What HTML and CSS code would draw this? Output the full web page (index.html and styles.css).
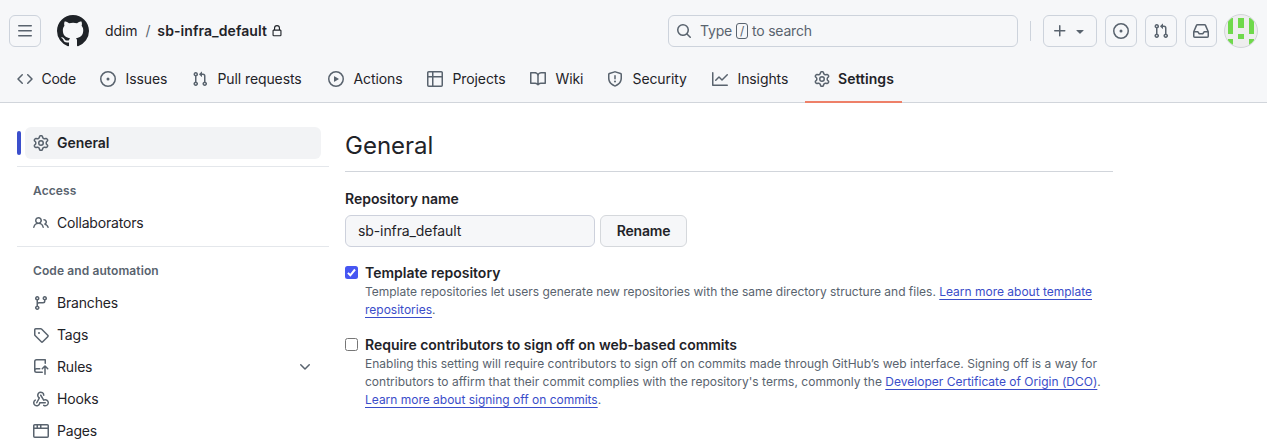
FILE: index.html
```html
<!DOCTYPE html>
<html lang="en">
<head>
<meta charset="utf-8">
<title>General settings</title>
<link rel="stylesheet" href="styles.css">
</head>
<body>
<svg class="sprite" aria-hidden="true">
  <symbol id="gear" viewBox="0 0 16 16"><path d="M8 0a8.2 8.2 0 0 1 .701.031C9.444.095 9.99.645 10.16 1.29l.288 1.107c.018.066.079.158.212.224.231.114.454.243.668.386.123.082.233.09.299.071l1.103-.303c.644-.176 1.392.021 1.82.63.27.385.506.792.704 1.218.315.675.111 1.422-.364 1.891l-.814.806c-.049.048-.098.147-.088.294.016.257.016.515 0 .772-.01.147.038.246.088.294l.814.806c.475.469.679 1.216.364 1.891a7.977 7.977 0 0 1-.704 1.217c-.428.61-1.176.807-1.82.63l-1.102-.302c-.067-.019-.177-.011-.3.071a5.909 5.909 0 0 1-.668.386c-.133.066-.194.158-.211.224l-.29 1.106c-.168.646-.715 1.196-1.458 1.26a8.006 8.006 0 0 1-1.402 0c-.743-.064-1.289-.614-1.458-1.26l-.289-1.106c-.018-.066-.079-.158-.212-.224a5.738 5.738 0 0 1-.668-.386c-.123-.082-.233-.09-.299-.071l-1.103.303c-.644.176-1.392-.021-1.82-.63a8.12 8.12 0 0 1-.704-1.218c-.315-.675-.111-1.422.363-1.891l.815-.806c.05-.048.098-.147.088-.294a6.214 6.214 0 0 1 0-.772c.01-.147-.038-.246-.088-.294l-.815-.806C.635 6.045.431 5.298.746 4.623a7.92 7.92 0 0 1 .704-1.217c.428-.61 1.176-.807 1.82-.63l1.102.302c.067.019.177.011.3-.071.214-.143.437-.272.668-.386.133-.066.194-.158.211-.224l.29-1.106C6.009.645 6.556.095 7.299.03 7.53.01 7.764 0 8 0Zm-.571 1.525c-.036.003-.108.036-.137.146l-.289 1.105c-.147.561-.549.967-.998 1.189-.173.086-.34.183-.5.29-.417.278-.97.423-1.529.27l-1.103-.303c-.109-.03-.175.016-.195.045-.22.312-.412.644-.573.99-.014.031-.021.11.059.19l.815.806c.411.406.562.957.53 1.456a4.709 4.709 0 0 0 0 .582c.032.499-.119 1.05-.53 1.456l-.815.806c-.081.08-.073.159-.059.19.162.346.353.677.573.989.02.03.085.076.195.046l1.102-.303c.56-.153 1.113-.008 1.53.27.161.107.328.204.501.29.447.222.85.629.997 1.189l.289 1.105c.029.109.101.143.137.146a6.6 6.6 0 0 0 1.142 0c.036-.003.108-.036.137-.146l.289-1.105c.147-.561.549-.967.998-1.189.173-.086.34-.183.5-.29.417-.278.97-.423 1.529-.27l1.103.303c.109.029.175-.016.195-.045.22-.313.411-.644.573-.99.014-.031.021-.11-.059-.19l-.815-.806c-.411-.406-.562-.957-.53-1.456a4.709 4.709 0 0 0 0-.582c-.032-.499.119-1.05.53-1.456l.815-.806c.081-.08.073-.159.059-.19a6.464 6.464 0 0 0-.573-.989c-.02-.03-.085-.076-.195-.046l-1.102.303c-.56.153-1.113.008-1.53-.27a4.44 4.44 0 0 0-.501-.29c-.447-.222-.85-.629-.997-1.189l-.289-1.105c-.029-.11-.101-.143-.137-.146a6.6 6.6 0 0 0-1.142 0ZM11 8a3 3 0 1 1-6 0 3 3 0 0 1 6 0ZM9.5 8a1.5 1.5 0 1 0-3.001.001A1.5 1.5 0 0 0 9.5 8Z"/></symbol>
  <symbol id="issue" viewBox="0 0 16 16"><path d="M8 9.5a1.5 1.5 0 1 0 0-3 1.5 1.5 0 0 0 0 3Z"/><path d="M8 0a8 8 0 1 1 0 16A8 8 0 0 1 8 0ZM1.5 8a6.5 6.5 0 1 0 13 0 6.5 6.5 0 0 0-13 0Z"/></symbol>
  <symbol id="pull" viewBox="0 0 16 16"><path d="M1.5 3.25a2.25 2.25 0 1 1 3 2.122v5.256a2.251 2.251 0 1 1-1.5 0V5.372A2.25 2.25 0 0 1 1.5 3.25Zm5.677-.177L9.573.677A.25.25 0 0 1 10 .854V2.5h1A2.5 2.5 0 0 1 13.5 5v5.628a2.251 2.251 0 1 1-1.5 0V5a1 1 0 0 0-1-1h-1v1.646a.25.25 0 0 1-.427.177L7.177 3.427a.25.25 0 0 1 0-.354ZM3.75 2.5a.75.75 0 1 0 0 1.5.75.75 0 0 0 0-1.5Zm0 9.5a.75.75 0 1 0 0 1.5.75.75 0 0 0 0-1.5Zm8.25.75a.75.75 0 1 0 1.5 0 .75.75 0 0 0-1.5 0Z"/></symbol>
</svg>

<header class="header">
  <div class="topbar">
    <button class="icon-btn" aria-label="Menu"><svg class="icon" viewBox="0 0 16 16"><path d="M1 2.75A.75.75 0 0 1 1.75 2h12.5a.75.75 0 0 1 0 1.5H1.75A.75.75 0 0 1 1 2.75Zm0 5A.75.75 0 0 1 1.75 7h12.5a.75.75 0 0 1 0 1.5H1.75A.75.75 0 0 1 1 7.75ZM1.75 12h12.5a.75.75 0 0 1 0 1.5H1.75a.75.75 0 0 1 0-1.5Z"/></svg></button>
    <svg class="logo" viewBox="0 0 16 16"><path d="M8 0c4.42 0 8 3.58 8 8a8.013 8.013 0 0 1-5.45 7.59c-.4.08-.55-.17-.55-.38 0-.27.01-1.13.01-2.2 0-.75-.25-1.23-.54-1.48 1.78-.2 3.65-.88 3.65-3.95 0-.88-.31-1.59-.82-2.15.08-.2.36-1.02-.08-2.12 0 0-.67-.22-2.2.82-.64-.18-1.32-.27-2-.27-.68 0-1.36.09-2 .27-1.53-1.03-2.2-.82-2.2-.82-.44 1.1-.16 1.92-.08 2.12-.51.56-.82 1.28-.82 2.15 0 3.06 1.86 3.75 3.64 3.95-.23.2-.44.55-.51 1.07-.46.21-1.61.55-2.33-.66-.15-.24-.6-.83-1.23-.82-.67.01-.27.38.01.53.34.19.73.9.82 1.13.16.45.68 1.31 2.69.94 0 .67.01 1.3.01 1.49 0 .21-.15.45-.55.38A7.995 7.995 0 0 1 0 8c0-4.42 3.58-8 8-8Z"/></svg>
    <div class="crumbs">
      <span class="owner">ddim</span><span class="slash">/</span><span class="repo">sb-infra_default</span>
      <svg class="lock" viewBox="0 0 16 16"><path d="M4 4a4 4 0 0 1 8 0v2h.25c.966 0 1.75.784 1.75 1.75v5.5A1.75 1.75 0 0 1 12.25 15h-8.5A1.75 1.75 0 0 1 2 13.250v-5.5C2 6.784 2.784 6 3.750 6H4Zm8.250 3.500h-8.500a.25.25 0 0 0-.25.25v5.500c0 .138.112.25.25.25h8.500a.25.25 0 0 0 .25-.25v-5.500a.25.25 0 0 0-.25-.25ZM10.500 6V4a2.500 2.500 0 1 0-5 0v2Z"/></svg>
    </div>
    <div class="search">
      <svg class="icon" viewBox="0 0 16 16"><path d="M10.680 11.740a6 6 0 0 1-7.922-8.982 6 6 0 0 1 8.982 7.922l3.040 3.040a.749.749 0 0 1-.326 1.275.749.749 0 0 1-.734-.215ZM11.500 7a4.499 4.499 0 1 0-8.997 0A4.499 4.499 0 0 0 11.500 7Z"/></svg>
      <span class="search-text"><span>Type</span><kbd class="key">/</kbd><span>to search</span></span>
    </div>
    <span class="separator"></span>
    <div class="actions">
      <button class="icon-btn create" aria-label="Create new"><svg class="icon" viewBox="0 0 16 16"><path d="M7.750 2a.75.75 0 0 1 .75.75V7h4.250a.75.75 0 0 1 0 1.500H8.500v4.250a.75.75 0 0 1-1.500 0V8.500H2.750a.75.75 0 0 1 0-1.500H7V2.750A.75.75 0 0 1 7.750 2Z"/></svg><svg class="icon" viewBox="0 0 16 16"><path d="m4.427 7.427 3.396 3.396a.25.25 0 0 0 .354 0l3.396-3.396A.25.25 0 0 0 11.396 7H4.604a.25.25 0 0 0-.177.427Z"/></svg></button>
      <button class="icon-btn" aria-label="Issues"><svg class="icon"><use href="#issue"/></svg></button>
      <button class="icon-btn" aria-label="Pull requests"><svg class="icon"><use href="#pull"/></svg></button>
      <button class="icon-btn" aria-label="Inbox"><svg class="icon" viewBox="0 0 16 16"><path d="M2.800 2.060A1.750 1.750 0 0 1 4.410 1h7.180c.7 0 1.333.417 1.610 1.060l2.740 6.395c.04.093.06.194.06.295v4.500A1.750 1.750 0 0 1 14.250 15H1.750A1.750 1.750 0 0 1 0 13.250v-4.500c0-.101.02-.202.06-.295Zm1.610.44a.25.25 0 0 0-.23.152L1.887 8H4.750a.75.75 0 0 1 .6.3L6.625 10h2.750l1.275-1.700a.75.75 0 0 1 .6-.3h2.863L11.820 2.652a.25.25 0 0 0-.23-.152Zm10.090 7h-2.875l-1.275 1.700a.75.75 0 0 1-.6.3h-3.500a.75.75 0 0 1-.6-.3L4.375 9.500H1.500v3.750c0 .138.112.25.25.25h12.500a.25.25 0 0 0 .25-.25Z"/></svg></button>
      <svg class="avatar" viewBox="0 0 32 32"><path fill="#6fd94b" d="M3 3h5v16H3zM13 3h6v10h-6zM24 3h5v16h-5zM13 19h6v5h-6zM3 24h5v8H3zM24 24h5v8h-5z"/></svg>
    </div>
  </div>
  <nav class="tabs">
    <a class="tab code"><svg class="icon" viewBox="0 0 16 16"><path d="m11.280 3.220 4.250 4.250a.75.75 0 0 1 0 1.060l-4.250 4.250a.749.749 0 0 1-1.275-.326.749.749 0 0 1 .215-.734L13.940 8l-3.720-3.720a.749.749 0 0 1 .326-1.275.749.749 0 0 1 .734.215Zm-6.560 0a.751.751 0 0 1 1.042.018.751.751 0 0 1 .018 1.042L2.060 8l3.720 3.720a.749.749 0 0 1-.326 1.275.749.749 0 0 1-.734-.215L.47 8.530a.75.75 0 0 1 0-1.060Z"/></svg><span>Code</span></a>
    <a class="tab"><svg class="icon"><use href="#issue"/></svg><span>Issues</span></a>
    <a class="tab"><svg class="icon"><use href="#pull"/></svg><span>Pull requests</span></a>
    <a class="tab"><svg class="icon" viewBox="0 0 16 16"><path d="M8 0a8 8 0 1 1 0 16A8 8 0 0 1 8 0ZM1.500 8a6.500 6.500 0 1 0 13 0 6.500 6.500 0 0 0-13 0Zm4.879-2.773 4.264 2.559a.25.25 0 0 1 0 .428l-4.264 2.559A.25.25 0 0 1 6 10.559V5.442a.25.25 0 0 1 .379-.215Z"/></svg><span>Actions</span></a>
    <a class="tab"><svg class="icon" viewBox="0 0 16 16"><path d="M0 1.750C0 .784.784 0 1.750 0h12.500C15.216 0 16 .784 16 1.750v12.500A1.750 1.750 0 0 1 14.250 16H1.750A1.750 1.750 0 0 1 0 14.250ZM6.500 6.500v8h7.750a.25.25 0 0 0 .25-.25V6.500Zm8-1.500V1.750a.25.25 0 0 0-.25-.25H6.500V5Zm-13 1.500v7.750c0 .138.112.25.25.25H5v-8ZM5 5V1.500H1.750a.25.25 0 0 0-.25.25V5Z"/></svg><span>Projects</span></a>
    <a class="tab"><svg class="icon" viewBox="0 0 16 16"><path d="M0 1.750A.75.75 0 0 1 .75 1h4.253c1.227 0 2.317.59 3 1.501A3.743 3.743 0 0 1 11.006 1h4.245a.75.75 0 0 1 .75.75v10.500a.75.75 0 0 1-.75.75h-4.507a2.250 2.250 0 0 0-1.591.659l-.622.621a.75.75 0 0 1-1.060 0l-.622-.621A2.250 2.250 0 0 0 5.258 13H.75a.75.75 0 0 1-.75-.75Zm7.251 10.324.004-5.073-.002-2.253A2.250 2.250 0 0 0 5.003 2.500H1.500v9h3.757a3.750 3.750 0 0 1 1.994.574ZM8.755 4.750l-.004 7.322a3.752 3.752 0 0 1 1.992-.572H14.500v-9h-3.495a2.250 2.250 0 0 0-2.250 2.250Z"/></svg><span>Wiki</span></a>
    <a class="tab"><svg class="icon" viewBox="0 0 16 16"><path d="M7.467.133a1.748 1.748 0 0 1 1.066 0l5.250 1.680A1.750 1.750 0 0 1 15 3.480V7c0 1.566-.32 3.182-1.303 4.682-.983 1.498-2.585 2.813-5.032 3.855a1.697 1.697 0 0 1-1.330 0c-2.447-1.042-4.049-2.357-5.032-3.855C1.320 10.182 1 8.566 1 7V3.480a1.750 1.750 0 0 1 1.217-1.667Zm.61 1.429a.25.25 0 0 0-.153 0l-5.250 1.680a.25.25 0 0 0-.174.238V7c0 1.358.275 2.666 1.057 3.860.784 1.194 2.121 2.340 4.366 3.297a.196.196 0 0 0 .154 0c2.245-.956 3.582-2.104 4.366-3.298C13.225 9.666 13.500 8.360 13.500 7V3.480a.251.251 0 0 0-.174-.237l-5.250-1.680ZM8.750 4.750v3a.75.75 0 0 1-1.500 0v-3a.75.75 0 0 1 1.500 0ZM9 10.500a1 1 0 1 1-2 0 1 1 0 0 1 2 0Z"/></svg><span>Security</span></a>
    <a class="tab"><svg class="icon" viewBox="0 0 16 16"><path d="M1.500 1.750V13.500h13.750a.75.75 0 0 1 0 1.500H.75a.75.75 0 0 1-.75-.75V1.750a.75.75 0 0 1 1.500 0Zm14.280 2.530-5.250 5.250a.75.75 0 0 1-1.060 0L7 7.060 4.280 9.780a.751.751 0 0 1-1.042-.018.751.751 0 0 1-.018-1.042l3.250-3.250a.75.75 0 0 1 1.060 0L10 7.940l4.720-4.720a.751.751 0 0 1 1.042.018.751.751 0 0 1 .018 1.042Z"/></svg><span>Insights</span></a>
    <a class="tab current"><svg class="icon"><use href="#gear"/></svg><span>Settings</span></a>
  </nav>
</header>

<div class="layout">
  <aside class="sidebar">
    <a class="item selected"><svg class="icon"><use href="#gear"/></svg><span>General</span></a>
    <section class="group">
      <h3 class="group-title">Access</h3>
      <a class="item"><svg class="icon" viewBox="0 0 16 16"><path d="M2 5.500a3.500 3.500 0 1 1 5.898 2.549 5.508 5.508 0 0 1 3.034 4.084.75.75 0 1 1-1.482.235 4 4 0 0 0-7.900 0 .75.75 0 0 1-1.482-.236A5.507 5.507 0 0 1 3.102 8.050 3.493 3.493 0 0 1 2 5.500ZM11 4a3.001 3.001 0 0 1 2.220 5.018 5.010 5.010 0 0 1 2.560 3.012.749.749 0 0 1-.885.954.752.752 0 0 1-.549-.514 3.507 3.507 0 0 0-2.522-2.372.75.75 0 0 1-.574-.73v-.352a.75.75 0 0 1 .416-.672A1.500 1.500 0 0 0 11 5.500.75.75 0 0 1 11 4Zm-5.500-.5a2 2 0 1 0-.001 3.999A2 2 0 0 0 5.500 3.500Z"/></svg><span>Collaborators</span></a>
    </section>
    <section class="group">
      <h3 class="group-title">Code and automation</h3>
      <a class="item"><svg class="icon" viewBox="0 0 16 16"><path d="M9.500 3.250a2.250 2.250 0 1 1 3 2.122V6A2.500 2.500 0 0 1 10 8.500H6a1 1 0 0 0-1 1v1.128a2.251 2.251 0 1 1-1.500 0V5.372a2.250 2.250 0 1 1 1.500 0v1.836A2.493 2.493 0 0 1 6 7h4a1 1 0 0 0 1-1v-.628A2.250 2.250 0 0 1 9.500 3.250Zm-6 0a.75.75 0 1 0 1.500 0 .75.75 0 0 0-1.500 0Zm8.250-.75a.75.75 0 1 0 0 1.500.75.75 0 0 0 0-1.500ZM4.250 12a.75.75 0 1 0 0 1.500.75.75 0 0 0 0-1.500Z"/></svg><span>Branches</span></a>
      <a class="item"><svg class="icon" viewBox="0 0 16 16"><path d="M1 7.775V2.750C1 1.784 1.784 1 2.750 1h5.025c.464 0 .91.184 1.238.513l6.250 6.250a1.750 1.750 0 0 1 0 2.474l-5.026 5.026a1.750 1.750 0 0 1-2.474 0l-6.250-6.250A1.752 1.752 0 0 1 1 7.775Zm1.500 0c0 .066.026.13.073.177l6.250 6.250a.25.25 0 0 0 .354 0l5.025-5.025a.25.25 0 0 0 0-.354l-6.250-6.250a.25.25 0 0 0-.177-.073H2.750a.25.25 0 0 0-.25.250ZM6 5a1 1 0 1 1 0 2 1 1 0 0 1 0-2Z"/></svg><span>Tags</span></a>
      <a class="item"><svg class="icon" viewBox="0 0 16 16"><path d="M1 2.500A2.500 2.500 0 0 1 3.500 0h8.750a.75.75 0 0 1 .75.75v3.500a.75.75 0 0 1-1.500 0V1.500h-8a1 1 0 0 0-1 1v6.708A2.493 2.493 0 0 1 3.500 9h3.250a.75.75 0 0 1 0 1.500H3.500a1 1 0 0 0 0 2h5.750a.75.75 0 0 1 0 1.500H3.500A2.500 2.500 0 0 1 1 11.500Zm13.230 7.790-1.480-1.480v6.440a.75.75 0 0 1-1.500 0V8.810l-1.480 1.480a.751.751 0 0 1-1.060-1.060l2.757-2.757a.75.75 0 0 1 1.066 0l2.757 2.757a.751.751 0 0 1-1.060 1.060Z"/></svg><span>Rules</span><svg class="icon chevron" viewBox="0 0 16 16"><path d="M12.780 5.220a.749.749 0 0 1 0 1.060l-4.250 4.250a.749.749 0 0 1-1.060 0L3.220 6.280a.749.749 0 1 1 1.060-1.060L8 8.939l3.720-3.719a.749.749 0 0 1 1.060 0Z"/></svg></a>
      <a class="item"><svg class="icon" viewBox="0 0 16 16"><path d="M5.500 4.250a2.250 2.250 0 0 1 4.500 0 .75.75 0 0 0 1.500 0 3.750 3.750 0 1 0-6.140 2.889l-2.272 4.258a.75.75 0 0 0 1.324.706L7 7.250a.75.75 0 0 0-.309-1.015A2.250 2.250 0 0 1 5.500 4.250Z"/><path d="M7.364 3.607a.75.75 0 0 1 1.030.257l2.608 4.349a3.750 3.750 0 1 1-.628 6.785.75.75 0 0 1 .752-1.299 2.250 2.250 0 1 0-.033-3.880.75.75 0 0 1-1.030-.256L7.107 4.636a.75.75 0 0 1 .257-1.030Z"/><path d="M2.900 8.776A.75.75 0 0 1 2.625 9.800 2.250 2.250 0 1 0 6 11.750a.75.75 0 0 1 .75-.751h5.500a.75.75 0 0 1 0 1.500H7.425a3.751 3.751 0 1 1-5.550-3.998.75.75 0 0 1 1.024.274Z"/></svg><span>Hooks</span></a>
      <a class="item"><svg class="icon" viewBox="0 0 16 16"><path d="M0 2.750C0 1.784.784 1 1.750 1h12.500c.966 0 1.750.784 1.750 1.750v10.500A1.750 1.750 0 0 1 14.250 15H1.750A1.750 1.750 0 0 1 0 13.250ZM14.500 6h-13v7.250c0 .138.112.25.25.25h12.500a.25.25 0 0 0 .25-.25Zm-6-3.500v2h6V2.750a.25.25 0 0 0-.25-.25ZM5 2.500v2h2v-2Zm-3.250 0a.25.25 0 0 0-.25.25V4.500h2v-2Z"/></svg><span>Pages</span></a>
    </section>
  </aside>

  <main class="main">
    <h2 class="title">General</h2>
    <label class="label">Repository name</label>
    <div class="rename">
      <div class="field">sb-infra_default</div>
      <button class="button">Rename</button>
    </div>
    <div class="option">
      <span class="checkbox checked"><svg viewBox="0 0 13 13"><path d="M2.900 6.900 5.300 9.300 10 3.500"/></svg></span>
      <div>
        <div class="option-title">Template repository</div>
        <p class="note"><span class="line tight">Template repositories let users generate new repositories with the same directory structure and files. <a>Learn more about template</a></span><span class="line"><a>repositories</a>.</span></p>
      </div>
    </div>
    <div class="option">
      <span class="checkbox"></span>
      <div>
        <div class="option-title">Require contributors to sign off on web-based commits</div>
        <p class="note"><span class="line">Enabling this setting will require contributors to sign off on commits made through GitHub’s web interface. Signing off is a way for</span><span class="line loose">contributors to affirm that their commit complies with the repository's terms, commonly the <a>Developer Certificate of Origin (DCO)</a>.</span><span class="line tight"><a>Learn more about signing off on commits</a>.</span></p>
      </div>
    </div>
  </main>
</div>
</body>
</html>
```
FILE: styles.css
```css
* { box-sizing: border-box; }
body {
  margin: 0;
  height: 447px;
  overflow: hidden;
  background: #fff;
  color: #1f2328;
  font: 14px/20px Inter, "Liberation Sans", sans-serif;
  letter-spacing: -0.1px;
}
h2, h3, p { margin: 0; }
button { font: inherit; letter-spacing: inherit; color: inherit; }
.sprite { position: absolute; width: 0; height: 0; }
.icon { width: 16px; height: 16px; flex: none; fill: #59636e; display: block; }

.header {
  height: 103px;
  background: #f6f7f9;
  border-bottom: 1px solid #d1d5db;
}
.topbar { display: flex; align-items: center; height: 62px; padding: 0 9px; }
.icon-btn {
  display: flex;
  align-items: center;
  justify-content: center;
  width: 32px;
  height: 32px;
  padding: 0;
  border: 1px solid #cdd3dc;
  border-radius: 6px;
  background: transparent;
}
.logo { width: 32px; height: 32px; margin-left: 16px; fill: #1f2328; }
.crumbs { display: flex; align-items: center; margin-left: 16px; width: 563px; }
.slash { margin: 0 7px 0 8px; color: #59636e; }
.repo { font-weight: 600; letter-spacing: 0.08px; }
.lock { width: 12px; height: 12px; margin-left: 4px; fill: #1f2328; }
.search {
  display: flex;
  align-items: center;
  gap: 8px;
  width: 350px;
  height: 32px;
  padding: 0 7px;
  border: 1px solid #cdd3dc;
  border-radius: 6px;
  color: #59636e;
}
.search-text { display: flex; align-items: center; gap: 4px; letter-spacing: -0.2px; }
.key {
  width: 12px;
  height: 16px;
  border: 1px solid #59636e;
  border-radius: 3px;
  font: 12px/14px Inter, sans-serif;
  text-align: center;
}
.separator { width: 1px; height: 20px; margin: 0 12px; background: #cdd3dc; }
.actions { display: flex; align-items: center; gap: 8px; }
.create { width: 54px; gap: 4px; }
.avatar {
  width: 34px;
  height: 34px;
  margin-left: -1px;
  border: 1px solid #d3d6da;
  border-radius: 50%;
  background: #eee;
}

.tabs {
  display: grid;
  grid-template-columns: 75px 84px 128px 91px 95px 69px 97px 93px 97px;
  column-gap: 8px;
  height: 41px;
  padding-left: 9px;
}
.tab {
  display: flex;
  align-items: center;
  gap: 9.5px;
  height: 41px;
  padding: 0 0 7px 8px;
  white-space: nowrap;
}
.code { gap: 8.5px; letter-spacing: -0.25px; }
.current {
  gap: 8px;
  padding-left: 9px;
  font-weight: 600;
  letter-spacing: 0.05px;
  box-shadow: inset 0 -2px #ee8068;
}

.layout { display: flex; gap: 16px; padding: 24px 0 0 17px; }
.sidebar { width: 312px; }
.item {
  display: flex;
  align-items: center;
  gap: 8px;
  height: 32px;
  margin: 0 8px;
  padding: 0 8px;
  border-radius: 6px;
  letter-spacing: -0.18px;
}
.selected { position: relative; background: #f2f3f5; font-weight: 600; letter-spacing: -0.05px; }
.selected::before {
  content: "";
  position: absolute;
  left: -8px;
  top: 4px;
  width: 4px;
  height: 24px;
  border-radius: 2px;
  background: #3b4fcc;
}
.group { margin-top: 7px; border-top: 1px solid #e4e7eb; padding-top: 15px; }
.group-title {
  margin: 0 16px 8px;
  color: #59636e;
  font-size: 12px;
  line-height: 17px;
  font-weight: 600;
  letter-spacing: 0.1px;
}
.chevron { margin-left: auto; }

.main { width: 768px; }
.title {
  height: 45px;
  border-bottom: 1px solid #d1d5db;
  font-size: 24px;
  line-height: 37px;
  font-weight: 400;
  letter-spacing: 0;
}
.label { display: block; margin: 17px 0 6px; font-weight: 600; letter-spacing: -0.03px; }
.rename { display: flex; gap: 5px; }
.field {
  width: 250px;
  height: 32px;
  padding: 5px 12px;
  border: 1px solid #cdd1dc;
  border-radius: 6px;
  background: #f6f7f9;
}
.button {
  width: 87px;
  height: 32px;
  padding: 0;
  border: 1px solid #d5d8dc;
  border-radius: 6px;
  background: #f6f7f9;
  font-weight: 600;
  letter-spacing: -0.2px;
}
.option { display: flex; gap: 7px; margin-top: 16px; }
.checkbox {
  width: 13px;
  height: 13px;
  margin-top: 3px;
  border: 1px solid #767676;
  border-radius: 2.5px;
}
.checked { border: 0; background: #4656f2; }
.checked svg { display: block; fill: none; stroke: #fff; stroke-width: 2; }
.option-title { font-weight: 600; line-height: 20px; letter-spacing: -0.01px; }
.note { color: #59636e; font-size: 12px; line-height: 18px; letter-spacing: 0; }
.line { display: block; white-space: nowrap; }
.tight { letter-spacing: -0.01px; }
.loose { letter-spacing: 0.01px; }
.note a {
  color: #3a4dc9;
  text-decoration: underline;
  text-decoration-thickness: 1px;
  text-decoration-skip-ink: none;
  text-underline-offset: 3px;
}
```
